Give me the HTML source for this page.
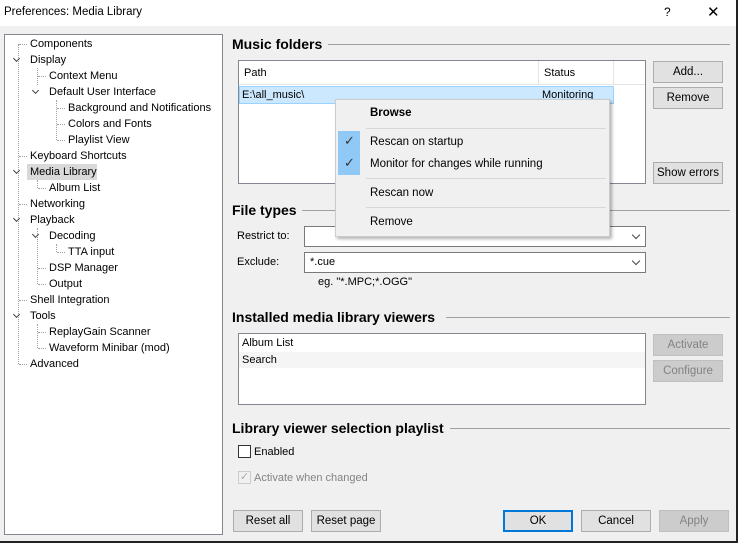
<!DOCTYPE html><html><head><style>
*{margin:0;padding:0;box-sizing:border-box}
body{width:738px;height:543px;background:#f0f0f0;font-family:"Liberation Sans",sans-serif;font-size:11px;color:#000;position:relative;overflow:hidden}
.a{position:absolute;white-space:nowrap}
.t{position:absolute;white-space:nowrap;line-height:16px}
.h{position:absolute;font-weight:bold;font-size:14px;line-height:18px;white-space:nowrap}
.ln{position:absolute;height:1px;background:#a0a0a0}
.btn{position:absolute;height:22px;background:#e1e1e1;border:1px solid #adadad;text-align:center;line-height:20px;font-size:11.5px}
.dis{background:#ccc;border-color:#bfbfbf;color:#838383}
.dv{position:absolute;border-left:1px dotted #a0a0a0;width:0}
.dh{position:absolute;border-top:1px dotted #a0a0a0;height:0}
.chev{position:absolute;width:5px;height:5px;border-right:1.5px solid #444;border-bottom:1.5px solid #444;transform:rotate(45deg)}
.combo{position:absolute;background:#fff;border:1px solid #7a7a7a;height:21px;line-height:19px;padding-left:5px}
.combo:after{content:"";position:absolute;right:6px;top:5px;width:5px;height:5px;border-right:1px solid #444;border-bottom:1px solid #444;transform:rotate(45deg)}
</style></head><body>
<div class="a" style="left:0;top:0;width:738px;height:26px;background:#fff"></div>
<div class="a" style="left:4px;top:6px;font-size:11.5px">Preferences: Media Library</div>
<div class="a" style="left:664px;top:5px;font-size:12px">?</div>
<div class="a" style="left:707px;top:3px;font-size:15px;font-weight:300">✕</div>
<div class="a" style="right:0;top:0;width:2px;height:543px;background:#222"></div>
<div class="a" style="left:0;bottom:0;width:738px;height:2px;background:#222"></div>

<div class="a" style="left:4px;top:34px;width:219px;height:501px;background:#fff;border:1px solid #828790"></div>
<div class="dv" style="left:18px;top:44px;height:320px"></div>
<div class="dv" style="left:37px;top:68px;height:17px"></div>
<div class="dv" style="left:56px;top:100px;height:40px"></div>
<div class="dv" style="left:37px;top:180px;height:8px"></div>
<div class="dv" style="left:37px;top:228px;height:56px"></div>
<div class="dv" style="left:56px;top:244px;height:8px"></div>
<div class="dv" style="left:37px;top:324px;height:24px"></div>
<div class="dh" style="left:19px;top:44px;width:8px"></div>
<div class="dh" style="left:19px;top:156px;width:8px"></div>
<div class="dh" style="left:19px;top:204px;width:8px"></div>
<div class="dh" style="left:19px;top:300px;width:8px"></div>
<div class="dh" style="left:19px;top:364px;width:8px"></div>
<div class="dh" style="left:38px;top:76px;width:8px"></div>
<div class="dh" style="left:38px;top:188px;width:8px"></div>
<div class="dh" style="left:38px;top:268px;width:8px"></div>
<div class="dh" style="left:38px;top:284px;width:8px"></div>
<div class="dh" style="left:38px;top:332px;width:8px"></div>
<div class="dh" style="left:38px;top:348px;width:8px"></div>
<div class="dh" style="left:57px;top:108px;width:8px"></div>
<div class="dh" style="left:57px;top:124px;width:8px"></div>
<div class="dh" style="left:57px;top:140px;width:8px"></div>
<div class="dh" style="left:57px;top:252px;width:8px"></div>
<div class="chev" style="left:14px;top:56px"></div>
<div class="chev" style="left:33px;top:88px"></div>
<div class="chev" style="left:14px;top:168px"></div>
<div class="chev" style="left:14px;top:216px"></div>
<div class="chev" style="left:33px;top:232px"></div>
<div class="chev" style="left:14px;top:312px"></div>
<div class="a" style="left:27px;top:164px;width:70px;height:16px;background:#d9d9d9"></div>
<div class="t" style="left:30px;top:36px">Components</div>
<div class="t" style="left:30px;top:52px">Display</div>
<div class="t" style="left:49px;top:68px">Context Menu</div>
<div class="t" style="left:49px;top:84px">Default User Interface</div>
<div class="t" style="left:68px;top:100px">Background and Notifications</div>
<div class="t" style="left:68px;top:116px">Colors and Fonts</div>
<div class="t" style="left:68px;top:132px">Playlist View</div>
<div class="t" style="left:30px;top:148px">Keyboard Shortcuts</div>
<div class="t" style="left:30px;top:164px">Media Library</div>
<div class="t" style="left:49px;top:180px">Album List</div>
<div class="t" style="left:30px;top:196px">Networking</div>
<div class="t" style="left:30px;top:212px">Playback</div>
<div class="t" style="left:49px;top:228px">Decoding</div>
<div class="t" style="left:68px;top:244px">TTA input</div>
<div class="t" style="left:49px;top:260px">DSP Manager</div>
<div class="t" style="left:49px;top:276px">Output</div>
<div class="t" style="left:30px;top:292px">Shell Integration</div>
<div class="t" style="left:30px;top:308px">Tools</div>
<div class="t" style="left:49px;top:324px">ReplayGain Scanner</div>
<div class="t" style="left:49px;top:340px">Waveform Minibar (mod)</div>
<div class="t" style="left:30px;top:356px">Advanced</div>

<div class="h" style="left:232px;top:35px">Music folders</div>
<div class="ln" style="left:328px;top:44px;width:402px"></div>
<div class="a" style="left:238px;top:60px;width:408px;height:124px;background:#fff;border:1px solid #828790"></div>
<div class="a" style="left:239px;top:61px;width:406px;height:24px;border-bottom:1px solid #e5e5e5"></div>
<div class="a" style="left:538px;top:61px;width:1px;height:24px;background:#e5e5e5"></div>
<div class="a" style="left:613px;top:61px;width:1px;height:24px;background:#e5e5e5"></div>
<div class="t" style="left:244px;top:65px">Path</div>
<div class="t" style="left:544px;top:65px">Status</div>
<div class="a" style="left:239px;top:86px;width:375px;height:18px;background:#cce8ff;border:1px solid #99d1ff"></div>
<div class="t" style="left:242px;top:87px">E:\all_music\</div>
<div class="t" style="left:542px;top:87px">Monitoring</div>
<div class="btn" style="left:653px;top:61px;width:70px">Add...</div>
<div class="btn" style="left:653px;top:87px;width:70px">Remove</div>
<div class="btn" style="left:653px;top:162px;width:70px">Show errors</div>

<div class="h" style="left:232px;top:201px">File types</div>
<div class="ln" style="left:302px;top:210px;width:428px"></div>
<div class="t" style="left:237px;top:228px">Restrict to:</div>
<div class="combo" style="left:304px;top:226px;width:342px"></div>
<div class="t" style="left:237px;top:254px">Exclude:</div>
<div class="combo" style="left:304px;top:252px;width:342px">*.cue</div>
<div class="t" style="left:318px;top:274px">eg. "*.MPC;*.OGG"</div>

<div class="a" style="left:335px;top:99px;width:275px;height:138px;background:#f0f0f0;border:1px solid #ccc;box-shadow:2px 2px 3px rgba(0,0,0,.3)"></div>
<div class="a" style="left:338px;top:131px;width:22px;height:44px;background:#90c8f6"></div>
<div class="a" style="left:344px;top:133px;color:#333;font-size:13px">✓</div>
<div class="a" style="left:344px;top:155px;color:#333;font-size:13px">✓</div>
<div class="a" style="left:366px;top:128px;width:240px;height:1px;background:#d7d7d7"></div>
<div class="a" style="left:366px;top:178px;width:240px;height:1px;background:#d7d7d7"></div>
<div class="a" style="left:366px;top:207px;width:240px;height:1px;background:#d7d7d7"></div>
<div class="t" style="left:370px;top:105px;font-weight:bold;font-size:11.5px">Browse</div>
<div class="t" style="left:370px;top:134px;font-size:11.5px">Rescan on startup</div>
<div class="t" style="left:370px;top:156px;font-size:11.5px">Monitor for changes while running</div>
<div class="t" style="left:370px;top:185px;font-size:11.5px">Rescan now</div>
<div class="t" style="left:370px;top:214px;font-size:11.5px">Remove</div>

<div class="h" style="left:232px;top:308px">Installed media library viewers</div>
<div class="ln" style="left:446px;top:317px;width:284px"></div>
<div class="a" style="left:238px;top:333px;width:408px;height:72px;background:#fff;border:1px solid #828790"></div>
<div class="a" style="left:239px;top:352px;width:406px;height:16px;background:#f5f5f5"></div>
<div class="t" style="left:242px;top:335px">Album List</div>
<div class="t" style="left:242px;top:352px">Search</div>
<div class="btn dis" style="left:653px;top:334px;width:70px">Activate</div>
<div class="btn dis" style="left:653px;top:360px;width:70px">Configure</div>

<div class="h" style="left:232px;top:419px">Library viewer selection playlist</div>
<div class="ln" style="left:450px;top:428px;width:280px"></div>
<div class="a" style="left:238px;top:445px;width:13px;height:13px;background:#fff;border:1px solid #333"></div>
<div class="t" style="left:254px;top:444px">Enabled</div>
<div class="a" style="left:238px;top:471px;width:13px;height:13px;border:1px solid #ccc;color:#aaa;font-size:11px;line-height:11px;text-align:center">✓</div>
<div class="t" style="left:254px;top:470px;color:#838383">Activate when changed</div>

<div class="btn" style="left:233px;top:510px;width:70px">Reset all</div>
<div class="btn" style="left:311px;top:510px;width:70px">Reset page</div>
<div class="btn" style="left:503px;top:510px;width:70px;border:2px solid #0078d7;line-height:18px">OK</div>
<div class="btn" style="left:581px;top:510px;width:70px">Cancel</div>
<div class="btn dis" style="left:659px;top:510px;width:70px">Apply</div>
</body></html>
